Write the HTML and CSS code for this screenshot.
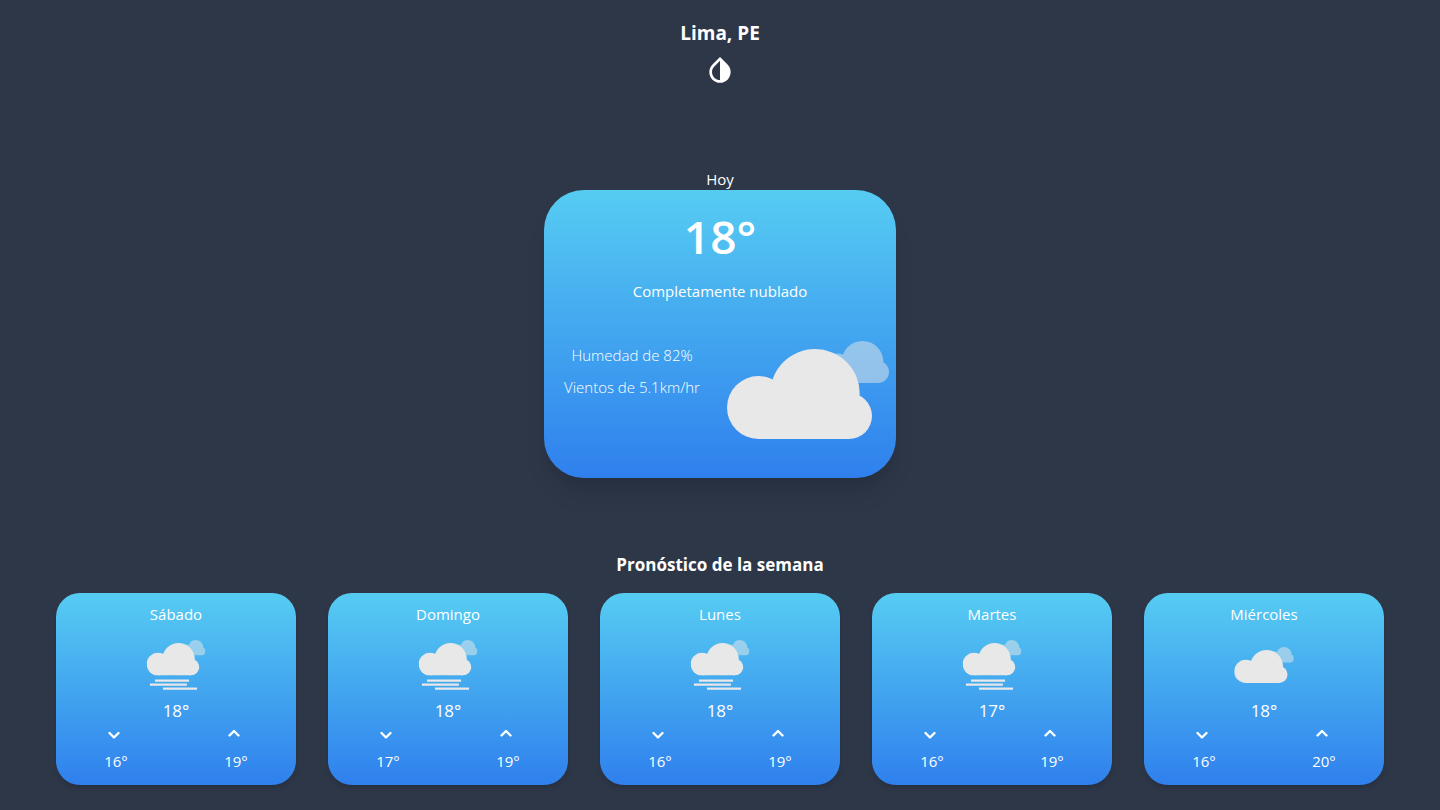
FILE: index.html
```html
<!DOCTYPE html>
<html lang="es">
<head>
<meta charset="utf-8">
<meta name="viewport" content="width=device-width, initial-scale=1">
<title>Clima en Lima, PE</title>
<link rel="stylesheet" href="styles.css">
</head>
<body>
<svg class="sprite" aria-hidden="true">
  <symbol id="cloud" viewBox="0 0 162 98">
    <g opacity=".5">
      <circle cx="135.500" cy="20.800" r="20.800"/>
      <circle cx="151" cy="31" r="11"/>
      <circle cx="110" cy="27" r="14.500"/>
      <path d="M110 20h41v22h-41z"/>
    </g>
    <circle cx="31.500" cy="66.500" r="31.500"/>
    <circle cx="88" cy="52.700" r="44.700"/>
    <circle cx="122" cy="75" r="23"/>
    <path d="M31 60h91v38H31z"/>
  </symbol>
  <symbol id="fog" viewBox="0 0 162 138">
    <use href="#cloud" width="162" height="98"/>
    <path d="M23 109h94v6H23zM9 120h102v6H9zM45 131h94v6H45z"/>
  </symbol>
  <symbol id="down" viewBox="0 0 24 22">
    <path d="M7.500 8l4.500 4.500L16.500 8" class="stroke"/>
  </symbol>
  <symbol id="up" viewBox="0 0 24 22">
    <path d="M7.500 10.500L12 6l4.500 4.500" class="stroke"/>
  </symbol>
</svg>

<header class="header">
  <h1 class="city">Lima, PE</h1>
  <button class="theme" type="button" aria-label="Cambiar tema">
    <svg class="theme-icon" viewBox="0 0 24 24"><path d="M17.660 7.930L12 2.270 6.340 7.930c-3.120 3.120-3.120 8.190 0 11.310C7.900 20.800 9.950 21.580 12 21.580s4.100-.78 5.660-2.340c3.120-3.120 3.120-8.190 0-11.310zM12 19.590c-1.600 0-3.110-.62-4.240-1.760C6.620 16.690 6 15.190 6 13.590s.62-3.110 1.760-4.240L12 5.100v14.490z"/></svg>
  </button>
</header>

<main>
  <section class="today">
    <h2 class="today-label">Hoy</h2>
    <div class="hero">
      <p class="hero-temp">18°</p>
      <p class="hero-text">Completamente nublado</p>
      <div class="hero-row">
        <div class="details">
          <p>Humedad de 82%</p>
          <p>Vientos de 5.1km/hr</p>
        </div>
        <svg class="hero-icon" viewBox="0 0 162 98"><use href="#cloud"/></svg>
      </div>
    </div>
  </section>

  <section class="week">
    <h2 class="week-title">Pronóstico de la semana</h2>
    <div class="cards">
      <article class="card">
        <h3 class="day">Sábado</h3>
        <div class="weather"><svg class="fog" viewBox="0 0 162 138"><use href="#fog"/></svg></div>
        <p class="temp">18°</p>
        <div class="range">
          <div><svg class="arrow"><use href="#down"/></svg><p>16°</p></div>
          <div><svg class="arrow"><use href="#up"/></svg><p>19°</p></div>
        </div>
      </article>
      <article class="card">
        <h3 class="day">Domingo</h3>
        <div class="weather"><svg class="fog" viewBox="0 0 162 138"><use href="#fog"/></svg></div>
        <p class="temp">18°</p>
        <div class="range">
          <div><svg class="arrow"><use href="#down"/></svg><p>17°</p></div>
          <div><svg class="arrow"><use href="#up"/></svg><p>19°</p></div>
        </div>
      </article>
      <article class="card">
        <h3 class="day">Lunes</h3>
        <div class="weather"><svg class="fog" viewBox="0 0 162 138"><use href="#fog"/></svg></div>
        <p class="temp">18°</p>
        <div class="range">
          <div><svg class="arrow"><use href="#down"/></svg><p>16°</p></div>
          <div><svg class="arrow"><use href="#up"/></svg><p>19°</p></div>
        </div>
      </article>
      <article class="card">
        <h3 class="day">Martes</h3>
        <div class="weather"><svg class="fog" viewBox="0 0 162 138"><use href="#fog"/></svg></div>
        <p class="temp">17°</p>
        <div class="range">
          <div><svg class="arrow"><use href="#down"/></svg><p>16°</p></div>
          <div><svg class="arrow"><use href="#up"/></svg><p>19°</p></div>
        </div>
      </article>
      <article class="card">
        <h3 class="day">Miércoles</h3>
        <div class="weather"><svg class="cloud" viewBox="0 0 162 98"><use href="#cloud"/></svg></div>
        <p class="temp">18°</p>
        <div class="range">
          <div><svg class="arrow"><use href="#down"/></svg><p>16°</p></div>
          <div><svg class="arrow"><use href="#up"/></svg><p>20°</p></div>
        </div>
      </article>
    </div>
  </section>
</main>
</body>
</html>
```

FILE: styles.css
```css
* {
  box-sizing: border-box;
  margin: 0;
  padding: 0;
}

body {
  min-height: 100vh;
  background: #2d3748;
  color: #fff;
  font-family: "Segoe UI", "Open Sans", "Noto Sans", sans-serif;
  font-size: 15px;
  line-height: 28px;
  text-align: center;
}

svg {
  display: block;
}

.sprite {
  position: absolute;
  width: 0;
  height: 0;
}

.stroke {
  fill: none;
  stroke: #fff;
  stroke-width: 2.4;
  stroke-linecap: round;
  stroke-linejoin: round;
}

.header {
  display: flex;
  flex-direction: column;
  align-items: center;
  gap: 7px;
  padding-top: 19px;
}

.city {
  font-size: 19px;
  font-weight: 700;
}

.week-title {
  font-size: 17px;
  font-weight: 700;
}

.theme {
  border: 0;
  background: none;
  cursor: pointer;
}

.theme-icon {
  width: 32px;
  height: 32px;
  fill: #fff;
}

.today {
  display: flex;
  flex-direction: column;
  align-items: center;
  padding: 82px 16px 73px;
}

.today-label {
  font-size: 15px;
  font-weight: 400;
  line-height: 22px;
}

.hero {
  width: 100%;
  max-width: 352px;
  padding-top: 14px;
  border-radius: 40px;
  background: linear-gradient(#56ccf2, #2f80ed);
  box-shadow: 0 20px 25px -5px rgba(0, 0, 0, 0.1), 0 10px 10px -5px rgba(0, 0, 0, 0.04);
}

.hero-temp {
  font-size: 46px;
  font-weight: 600;
  line-height: 64px;
}

.hero-text {
  padding-top: 9px;
}

.hero-row {
  display: grid;
  grid-template-columns: 1fr 1fr;
  height: 173px;
  padding-bottom: 3px;
}

.details {
  padding-top: 34px;
  font-weight: 300;
  line-height: 32px;
}

.hero-icon {
  width: 162px;
  height: 98px;
  place-self: center;
  fill: #e8e8e8;
}

.cards {
  display: flex;
  flex-wrap: wrap;
  justify-content: center;
  gap: 32px;
  padding: 14px 16px 24px;
}

.card {
  width: 240px;
  padding: 7px 0 10px;
  border-radius: 24px;
  background: linear-gradient(#56ccf2, #2f80ed);
  box-shadow: 0 4px 6px -1px rgba(0, 0, 0, 0.1), 0 2px 4px -1px rgba(0, 0, 0, 0.06);
}

.day {
  font-size: 15px;
  font-weight: 400;
}

.weather {
  display: grid;
  place-items: center;
  height: 64px;
  margin-top: 5px;
  fill: #e8e8e8;
}

.fog {
  width: 60px;
  height: 50px;
}

.cloud {
  width: 60px;
  height: 36px;
}

.temp {
  font-size: 17px;
  line-height: 28px;
}

.range {
  display: grid;
  grid-template-columns: 1fr 1fr;
}

.arrow {
  width: 28px;
  height: 22px;
  margin: 0 auto;
  padding-right: 4px;
}
```
